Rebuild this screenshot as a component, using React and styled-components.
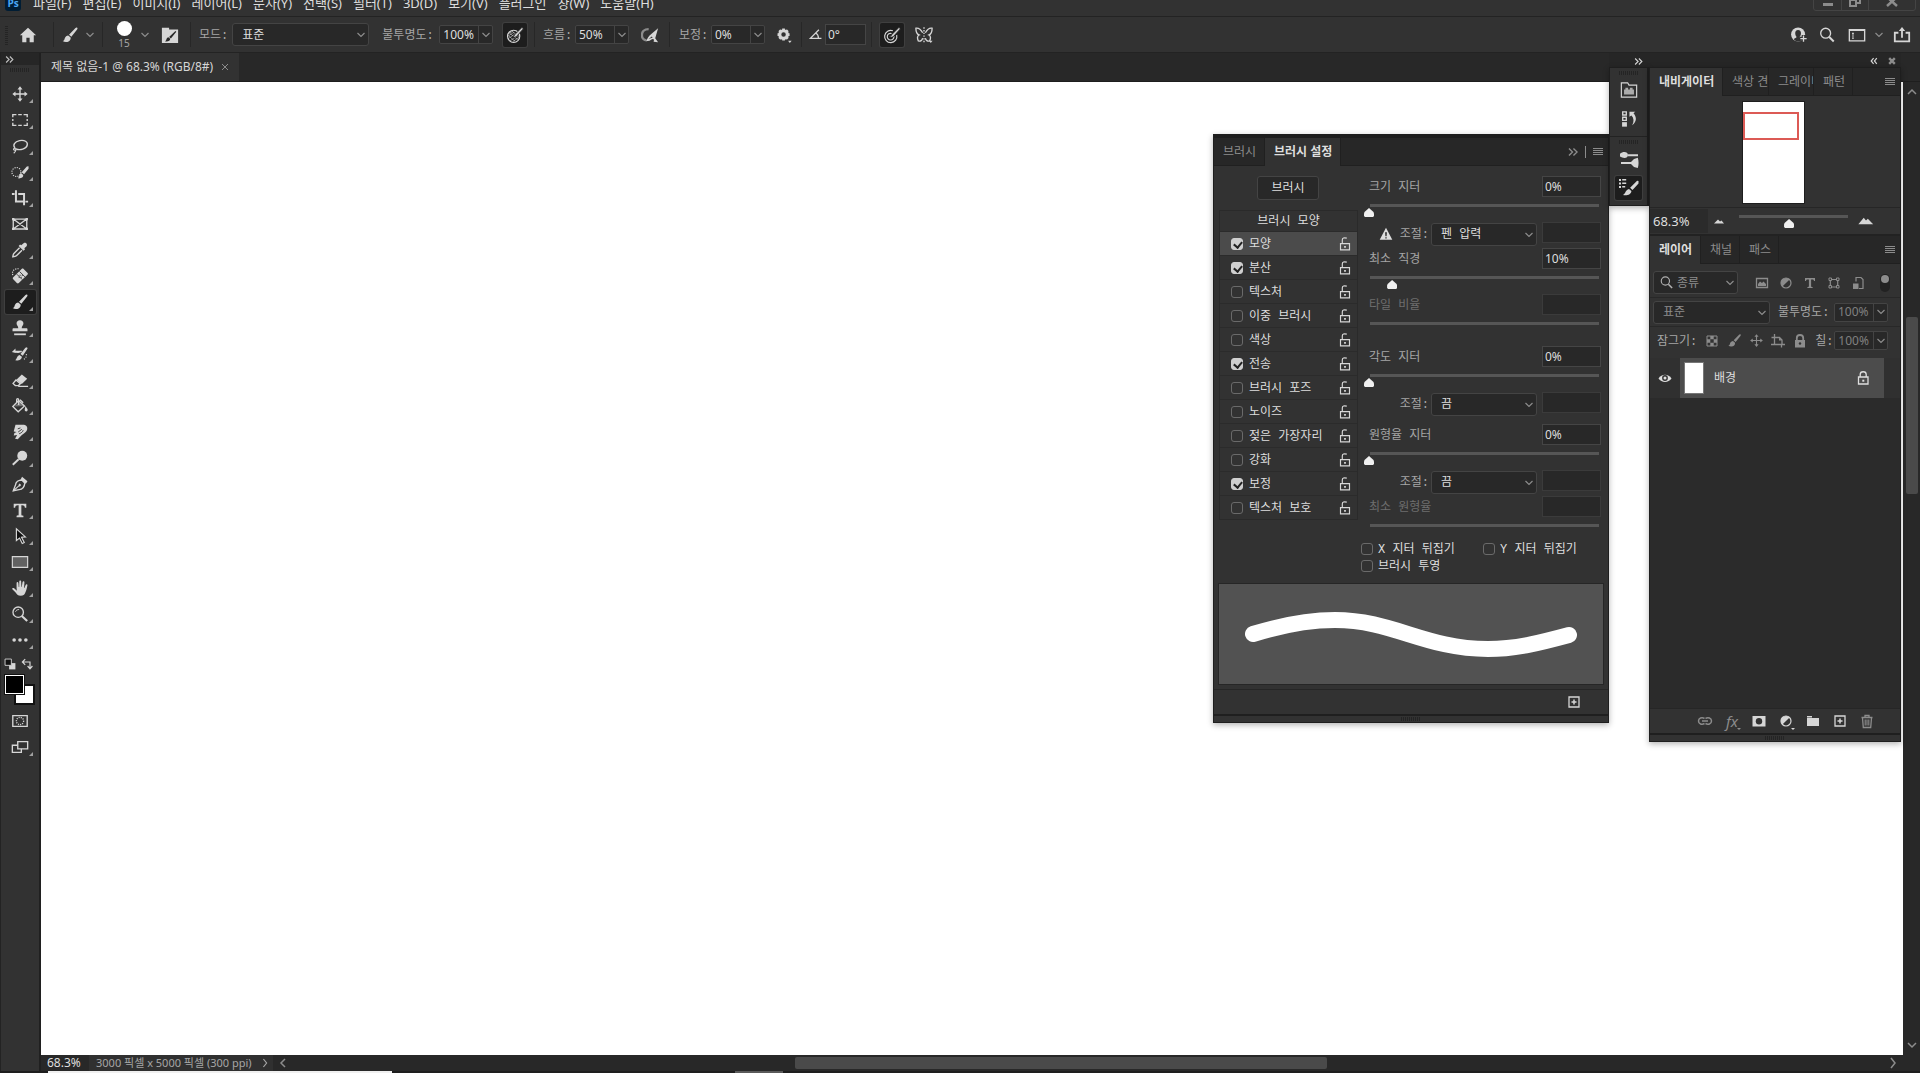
import React, { useState } from 'react';
import styled, { createGlobalStyle, css } from 'styled-components';

const GlobalStyle = createGlobalStyle`
  * {
    box-sizing: border-box;
  }
  body {
    margin: 0;
    overflow: hidden;
    background: #282828;
    color: #dedede;
    font: 13px/16px 'Noto Sans', 'Noto Sans CJK KR', sans-serif;
  }
  button, input, select {
    font: inherit;
    color: inherit;
    margin: 0;
    padding: 0;
    border: 0;
    background: none;
    outline: none;
  }
  button {
    display: flex;
    align-items: center;
    justify-content: center;
  }
  svg {
    display: block;
    flex: none;
  }
`;

const labelFont = css`
  font: 12px/16px 'Liberation Mono', 'Noto Sans CJK KR', monospace;
`;

/* icons, all drawn on a 20 x 20 grid */

const line = { fill: 'none', stroke: 'currentColor', strokeWidth: 1.5 };
const brushShape = (
  <>
    <path d="M17.8 1.8c.8.6.6 1.5.1 2.2l-6.4 8-2.6-2.3 7.2-7.4c.5-.6 1.200-.9 1.700-.5z" />
    <path d="M8 10.500l2.700 2.400c.5 3-2 5-4.700 5-1.700.1-3-.3-4.200-1.200 1.800-.4 1.900-1.500 2.400-3.100.6-1.900 2.200-3.100 3.800-3.100z" />
  </>
);

const icons = {
  home: <path d="M10 2L1 10.300h2.600V18h4.600v-5h3.600v5h4.600v-7.700H19z" />,
  brush: brushShape,
  brushPreset: (
    <>
      <path d="M1 2h8v2h10v15H1z" />
      <path d="M16 5.500l1 1-6 7.500-2-1.800zM8.200 12.500l2 1.800c0 2.400-2.200 3.300-5.700 2.900 1.700-.9 1.200-4.200 3.700-4.700z" fill="#282828" />
    </>
  ),
  chevron: <path d="M6.500 8l3.500 3.500L13.500 8" {...line} strokeWidth="1.200" />,
  chevronUp: <path d="M6 12l4-4 4 4" {...line} />,
  chevronDown: <path d="M6 8l4 4 4-4" {...line} />,
  chevronLeft: <path d="M12 6l-4 4 4 4" {...line} />,
  chevronRight: <path d="M8 5l4 5-4 5" {...line} />,
  collapse: <path d="M5.500 6l4 4-4 4M10.500 6l4 4-4 4" {...line} />,
  expand: <path d="M9.500 6.500L6.500 10l3 3.500M13.500 6.500l-3 3.500 3 3.500" {...line} />,
  close: <path d="M7 7l6 6M13 7l-6 6" {...line} strokeWidth="1" />,
  closeBold: <path d="M6.500 6.500l7 7M13.500 6.500l-7 7" {...line} strokeWidth="3" />,
  menu: <path d="M5 6.500h10M5 8.500h10M5 10.500h10M5 12.500h10" {...line} strokeWidth="1" />,
  opacityPen: (
    <>
      <circle cx="8.500" cy="11.500" r="6.800" {...line} strokeWidth="1.300" />
      <path d="M3.500 8l4-2M2.500 11l6.500-4M2.500 14l8-5.500M4.500 16.500l9-6M7.500 17.500l7-5M4 8l9 7M3 11l7 6M7 6l8 6" {...line} strokeWidth=".8" opacity=".8" />
      <path d="M17.800 1.500l1.500 1.700-8 8.800-3.300 1.300 1.300-3.300z" stroke="#1d1d1d" />
    </>
  ),
  sizePen: (
    <>
      <path d="M11 5.300a6.800 6.800 0 1 0 4.200 4.700M9.500 8.300a3.700 3.700 0 1 0 2.600 3" {...line} strokeWidth="1.300" />
      <circle cx="8.500" cy="11.700" r="1" />
      <path d="M17.800 1.500l1.500 1.700-8 8.800-3.300 1.300 1.300-3.300z" stroke="#1d1d1d" />
    </>
  ),
  airbrush: (
    <>
      <path d="M8.500 3.500C3.500 3.500 1 6.500 1 10s2 5.500 5 6" {...line} strokeWidth="2.600" opacity=".55" />
      <path d="M19 2.500L9.500 10.500l-1.500 2-2.500 4.500 4-.5 3-2 2 .5-.5 2.500 5 .5-3.200-4.300z" />
      <path d="M8.500 14.500l3.500-2.800 1 1z" fill="#323232" />
    </>
  ),
  gear: (
    <>
      <circle cx="9.500" cy="9.500" r="4.200" fill="none" stroke="currentColor" strokeWidth="3.400" />
      <path
        d="M9.500 2.800v2M9.500 14.200v2M2.800 9.500h2M14.200 9.500h2M4.800 4.800l1.400 1.400M12.800 12.800l1.400 1.400M14.200 4.800l-1.400 1.400M4.800 14.200l1.400-1.400"
        fill="none"
        stroke="currentColor"
        strokeWidth="3"
      />
      <path d="M14.500 16.500h4l-2 2.300z" />
    </>
  ),
  angle: <path d="M14 4.500L4 14.500h13M10.200 8.200c2 1 3.300 3.400 3.300 6.300" {...line} />,
  butterfly: (
    <>
      <path d="M8.500 7.500C6.500 4 3.500 2 1 2.500c0 3.300 1 6.500 3.500 7.500-2.300 1-2 4-.8 6.500 2.500 1 4.300-.5 4.800-3M11.500 7.500c2-3.500 5-5.500 7.500-5 0 3.300-1 6.500-3.500 7.500 2.300 1 2 4 .8 6.500-2.500 1-4.300-.5-4.800-3" {...line} />
      <path d="M10 1.500v17" {...line} strokeDasharray="1.500 1.500" />
      <path d="M15.500 16.500h4l-2 2.300z" />
    </>
  ),
  user: (
    <>
      <circle cx="9" cy="9.500" r="7.800" />
      <path d="M9 4.500c2.300 0 3.200 1.500 3.200 3.600 0 1.700-.6 2.800-1.300 3.600v1.100l3 1.700c-1 1.500-2.600 2.800-4.900 2.800s-3.900-1.300-4.900-2.800l3-1.700v-1.100c-.7-.8-1.300-1.900-1.300-3.600 0-2.100.9-3.600 3.200-3.600z" fill="#323232" />
      <path d="M15 10v8M11 14h8" fill="none" stroke="#323232" strokeWidth="4" />
      <path d="M15 10.500v7M11.500 14h7" {...line} />
    </>
  ),
  search: (
    <>
      <circle cx="8.500" cy="8" r="5.500" {...line} />
      <path d="M12.500 12.300l5 5" {...line} strokeWidth="2.200" />
    </>
  ),
  workspace: (
    <>
      <path d="M1.500 4h17v12.500h-17z" {...line} />
      <path d="M1.500 3.500h17v2h-17zM4.500 7.500h2v2h-2zM4.500 10.500h2v1.300h-2zM4.500 12.800h2v1.500h-2z" />
    </>
  ),
  share: (
    <>
      <path d="M6 7.500H2V17h16V7.500h-4" {...line} strokeWidth="2" />
      <path d="M10 13V4" {...line} strokeWidth="2" />
      <path d="M6.500 5.500L10 1l3.500 4.500z" />
    </>
  ),
  move: (
    <>
      <path d="M10 4v12M4 10h12" {...line} />
      <path d="M10 1.500L7.200 5h5.600zM10 18.500L7.200 15h5.600zM1.500 10L5 7.200v5.600zM18.500 10L15 7.200v5.600z" />
    </>
  ),
  marquee: <path d="M2 7V4h4M8 4h4M14 4h4v3M18 9v2M18 13v3h-4M12 16H8M6 16H2v-3M2 11V9" {...line} />,
  lasso: (
    <>
      <path d="M4.500 12.300C1.500 9 4 5 9.500 4s9.500 1.200 8.500 5.200-8 6-12.500 3.900" {...line} />
      <path d="M5.500 13.500c0 1.700-3.500 1.300-2.600-.3.800-1.500 3.200-.4 2.600 1.300-.4 1.300-1.200 2.500-2.500 3.500" {...line} strokeWidth="1.200" />
    </>
  ),
  quickSelect: (
    <>
      <circle cx="6" cy="10" r="5" {...line} strokeDasharray="1.300 1.300" strokeWidth="1.300" />
      <path d="M19.500 3.500v3l-5 6-2.600-2.300 5.700-6.300zM11 11l2.600 2.400c.2 2.800-2.400 4.100-6.100 3.600 2-1.300 1.400-5 3.500-6z" />
    </>
  ),
  crop: (
    <>
      <path d="M5.500 1.500V14H14M8 5.500h6.500V18" {...line} strokeWidth="2.200" />
      <path d="M1 4.400h3v2.200H1zM16 13h3v2h-3z" />
    </>
  ),
  frame: (
    <>
      <path d="M2.500 4.500h15v11h-15zM2.500 4.500l15 11M17.500 4.500l-15 11" {...line} />
      <path d="M1.200 3.200h2.600v2.600H1.200zM16.200 3.200h2.600v2.600h-2.600zM1.200 14.200h2.600v2.600H1.200zM16.200 14.200h2.600v2.600h-2.600z" />
    </>
  ),
  eyedropper: (
    <>
      <path d="M14 2.500c2-1.800 5 1 3.300 3.200l-2.500 2.400.8 1-1.700 1.600L8.500 5.500l1.600-1.600 1.200.9z" />
      <path d="M9.500 7.500l-6.300 6.300c-1 1-.9 2.700-1.200 3.700 1.500 0 3 0 4-1l6.200-6.200" {...line} />
    </>
  ),
  healing: (
    <>
      <path d="M14 2.200l4.200 4.200c.8.8.8 1.600 0 2.300l-9.500 9c-.7.700-1.500.7-2.200 0l-4-4c-.7-.7-.7-1.500 0-2.200l9.300-9.300c.7-.7 1.500-.7 2.200 0z" />
      <path d="M6.500 8l6 6M9.500 5l6 6" fill="none" stroke="#323232" />
      <path d="M9.500 8.500h1.200v1.200H9.500zM12 8.500h1.200v1.200H12zM10.800 10.700H12v1.200h-1.200zM8.500 10.700h1.200v1.200H8.500z" fill="#323232" />
      <path d="M2 9c-1.500-5 2-7.500 7-7" {...line} strokeWidth="1.300" strokeDasharray="1.300 1.300" />
    </>
  ),
  stamp: (
    <>
      <path d="M10 1.500c2.300 0 3.800 1.500 3.800 3.400 0 2-1.900 2.600-1.900 5.300H17c1 0 1.300.6 1.300 1.500v1.800H1.700v-1.800c0-.9.300-1.500 1.300-1.500h5.100c0-2.700-1.900-3.300-1.900-5.300 0-1.900 1.500-3.400 3.800-3.400z" />
      <path d="M3.500 16h13v2h-13z" />
    </>
  ),
  historyBrush: (
    <>
      <path d="M17.800 2.500l.6 1.500-5.300 8-2.600-2 5.500-7zM9.500 11l2.600 2c0 3-3.500 4.600-7.600 4 2.500-1.500 1.700-5 5-6z" />
      <path d="M1 7.800L5 4v2.500h7v1.300L8 9 5 8.500V9z" />
      <path d="M17 10c.6 3-1 5.500-4 6.500" {...line} strokeWidth="1.200" strokeDasharray="1.300 1.500" />
    </>
  ),
  eraser: (
    <>
      <path d="M12 4l6 4.500-6 6L6 9.800z" />
      <path d="M5.500 10l5 4-2.200 2.200H4.800l-2.500-2.400zM8 17h11" {...line} />
    </>
  ),
  bucket: (
    <>
      <path d="M8.500 4L2 10.500l6 6 7-6.500z" {...line} />
      <path d="M3.500 10.500l6-5 5.500 4.500z" opacity=".4" />
      <path d="M8.500 9V3c0-1.700-2.200-1.700-2.200 0v3M10 3l3.500 3.500" {...line} />
      <path d="M16 10c1.300 2 2.500 3 2.500 4.300 0 2.500-3.300 2.300-3.300 0z" />
    </>
  ),
  smudge: (
    <>
      <path d="M5 2h8c4 0 5.500 2 5 5-.6 3.500-4 4.500-7 7.500L7.500 18l-3-.4 2.300-4.300L3 14l.8-3 2.400-1L3 9.500z" />
      <path d="M7.500 6.500l3-1M8 10l4-3M9 12c2.500-1 4-2 4.500-4" fill="none" stroke="#323232" />
    </>
  ),
  dodge: (
    <>
      <circle cx="12.500" cy="7.500" r="5.500" />
      <path d="M8.500 11.500l-6.500 6" {...line} strokeWidth="2.200" />
    </>
  ),
  pen: (
    <>
      <path d="M12.300 5.500c-4 0-7 2.300-7.300 5.500l-2.500 6.500 6.500-1.200c3.500-.3 6-3.300 6.300-7.300z" {...line} />
      <path d="M12.300 2l6 5-1.800 2.700-6-4.500zM9.500 9.500l1.800 1.500-1.600 2L8 11.500z" />
      <path d="M2.700 17.500l6-5.500" {...line} strokeWidth="1.200" />
    </>
  ),
  type: <path d="M3 3h14v4.500h-1.600c-.3-2-.9-2.700-3-2.700h-.9v10c0 1.300.4 1.500 2.300 1.600V18H6.200v-1.600c1.900-.1 2.300-.3 2.300-1.600v-10h-.9c-2.100 0-2.700.7-3 2.700H3z" />,
  select: <path d="M6 2v13l3.500-2.700 3 6 2.200-1-3-6 4.300-.3z" fill="#111" stroke="currentColor" strokeWidth="1.300" />,
  shape: <path d="M1.500 4h17v12h-17z" fill="#626262" stroke="currentColor" strokeWidth="1.300" />,
  hand: <path d="M6.200 10V4.500c0-1.600 1.900-1.600 2 0L8.600 9h.5L9.200 2.800c0-1.600 2.100-1.600 2.100 0l.2 6.200h.4l.9-5.400c.3-1.500 2.200-1.300 2.100.2L14.500 10h.4l1.400-3.400c.6-1.300 2.200-.8 1.900.6-.8 3.900-1.500 6.300-2.500 8.300-.9 1.900-2 3-4.800 3-3.400 0-4.600-1.800-6-3.800L1.500 11.500c-.7-1.300.8-2.200 2-1.200l3 2.700z" />,
  zoom: (
    <>
      <circle cx="8" cy="8" r="5.800" {...line} />
      <path d="M5 7.500C5.500 6 7 5 9 5" {...line} strokeWidth="1" />
      <path d="M12 12.300l6 5.500" {...line} strokeWidth="2.400" />
    </>
  ),
  dots: (
    <>
      <circle cx="3.500" cy="10" r="2" />
      <circle cx="10" cy="10" r="2" />
      <circle cx="16.500" cy="10" r="2" />
    </>
  ),
  defaults: (
    <>
      <path d="M9 9h7v7H9z" />
      <path d="M4.500 4.500h7v7h-7z" fill="#111" stroke="currentColor" />
    </>
  ),
  swap: <path d="M3 7.500h9.500V15M6.500 4L3 7.500 6.500 11M9.500 12.500l3 3.500 3-3.500" {...line} />,
  quickMask: (
    <>
      <path d="M2 4h16v12H2z" {...line} />
      <circle cx="10" cy="10" r="4" {...line} strokeDasharray="1.200 1.200" />
    </>
  ),
  screenMode: (
    <>
      <path d="M1.500 8h10v8h-10z" {...line} />
      <path d="M7.500 4h11v8h-11z" fill="#323232" stroke="currentColor" strokeWidth="1.500" />
    </>
  ),
  library: (
    <>
      <path d="M1.500 2h7l1.500 2.500h8.500V18h-17z" {...line} strokeWidth="1.300" />
      <path d="M4.500 9.500H6V7.500h3v2h2v-2h3v2h1.500V15h-11z" opacity=".75" />
    </>
  ),
  history: (
    <>
      <path d="M3 2h4v3.500H3zM3 8h4v3.500H3z" {...line} />
      <path d="M2.300 13.500h5.400v5H2.300z" />
      <path d="M10.500 7.500V2h6.500l-2 1.700c4 4.500 3.500 9.800-1.500 13.300 2.300-4.500 2-8-.8-11z" />
    </>
  ),
  brushSettings: (
    <>
      <path d="M9 5.200h10v2H9zM2 13h10v2H2z" />
      <path d="M1 4.800c3-3 8-2.300 8 1.300S4 9.600 1 7.600zM11 14l4-4 3.800-1.200c1 3.500 1 7 0 10.200L15 18z" />
    </>
  ),
  brushList: (
    <>
      <path d="M0 1h2v2H0zM3.200 1h4v1.500h-4zM0 4.500h2v2H0zM3.200 4.500h4V6h-4zM0 8h2v2H0zM3.200 8h3v1.500h-3z" />
      <path d="M19.500 3v2.500l-6 6.500-2.400-2.200 7-7zM10 11l2.400 2c0 3.500-4.400 4.800-8.400 4 3-1.500 2-5 6-6z" />
    </>
  ),
  lockOpen: (
    <>
      <path d="M5 9.500h10v7H5zM7 9V5.500C7 3 9 3 12 3.500" {...line} strokeWidth="1.300" />
      <path d="M9 12.200h2v2H9z" />
    </>
  ),
  lock: (
    <>
      <path d="M5.500 9h9.500v7H5.500zM7.200 8.500V6.500c0-3.700 6-3.700 6 0v2" {...line} strokeWidth="1.300" />
      <path d="M9.300 11.700h2v2h-2z" />
    </>
  ),
  lockSolid: (
    <>
      <path d="M5 9h10v7.500H5z" />
      <path d="M6.800 9V7c0-4 6.400-4 6.400 0v2" {...line} strokeWidth="1.800" />
      <circle cx="10" cy="12.500" r="1.200" fill="#323232" />
    </>
  ),
  warning: (
    <>
      <path d="M10 3l7 13.500H3z" />
      <path d="M9 8h2l-.3 4.500H9.300zM9.200 13.500h1.600V15H9.200z" fill="#323232" />
    </>
  ),
  newItem: (
    <>
      <path d="M5 5h10v10H5z" {...line} strokeWidth="1.300" />
      <path d="M10 7.500v5M7.500 10h5" {...line} />
    </>
  ),
  mountainSmall: <path d="M5 12.500l4-4 2 2 1.500-1 2.500 3z" />,
  mountainLarge: <path d="M1.500 13.500l6-7 2.500 3 2-2 6 6z" />,
  image: (
    <>
      <path d="M4.500 5.500h11v9h-11z" {...line} strokeWidth="1.300" />
      <path d="M6 13V11l2-2.500 2 1.500 1.500-1.500L14 11v2z" />
    </>
  ),
  adjust: (
    <>
      <circle cx="10" cy="10" r="5" {...line} strokeWidth="1.200" />
      <path d="M13.600 6.400a5 5 0 0 0-7.200 7.200z" />
    </>
  ),
  typeSmall: <path d="M5 5h10v3h-1c-.2-1.100-.6-1.500-2-1.500h-.9v6.500c0 .9.300 1 1.500 1v1H7.400v-1c1.200 0 1.500-.1 1.500-1V6.500H8c-1.400 0-1.800.4-2 1.500H5z" />,
  vector: (
    <>
      <path d="M6 6.500h8M6 14h8M6.300 7v7M13.700 7v7" {...line} strokeWidth="1.200" />
      <path d="M5 5h2.500v2.500H5zM12.500 5H15v2.500h-2.500zM5 12.500h2.500V15H5zM12.500 12.500H15V15h-2.500z" fill="#323232" stroke="currentColor" />
    </>
  ),
  smart: (
    <>
      <path d="M8 8.500v-4h5l2 2v9h-4" {...line} strokeWidth="1.200" />
      <path d="M5 10.500h5.500V16H5z" />
    </>
  ),
  checker: (
    <>
      <path d="M5 5h10v10H5z" {...line} strokeWidth="1" />
      <path d="M8.300 5h3.400v3.300H8.300zM5 8.300h3.300v3.400H5zM11.700 8.300H15v3.400h-3.300zM8.300 11.700h3.400V15H8.300z" />
    </>
  ),
  artboard: (
    <>
      <path d="M6.500 3v3.500M3.500 6.500h8l2.500 2.500v5M6.500 6.500v7H14M13.500 16.500V14M3 13.500h3M14 13.500h3" {...line} strokeWidth="1.300" />
      <path d="M11 6.500V9.500h3z" />
    </>
  ),
  eye: (
    <>
      <path d="M3.500 10.500c3-5 10-5 13 0-3 4.500-10 4.500-13 0z" />
      <circle cx="10" cy="10" r="2.900" fill="#323232" />
      <circle cx="10" cy="10" r="1.500" />
    </>
  ),
  link: <path d="M9.500 7.500C7 6 3.500 7 3.500 10s3.500 4 6 2.500M10.500 7.500C13 6 16.500 7 16.500 10s-3.500 4-6 2.500M7 10h6" {...line} />,
  mask: (
    <>
      <path d="M3.500 5h13v10.500h-13z" />
      <circle cx="10" cy="10.200" r="3.200" fill="#323232" />
    </>
  ),
  folder: <path d="M4 5h5v1.500H4zM4 7h12v8H4z" />,
  trash: (
    <>
      <path d="M4.500 6.500h11M8 6V4.500h4V6M5.500 7l.8 9.500h7.400l.8-9.500" {...line} strokeWidth="1.300" />
      <path d="M8.200 8.500v6M10 8.500v6M11.800 8.500v6" {...line} strokeWidth="1.100" />
    </>
  ),
};

const Icon = ({ name, size = 20 }) => (
  <svg width={size} height={size} viewBox="0 0 20 20" fill="currentColor" aria-hidden="true">
    {icons[name]}
  </svg>
);

/* shared controls */

const IconButton = styled.button`
  display: flex;
  align-items: center;
  justify-content: center;
  width: ${(p) => p.$w || 24}px;
  height: 24px;
  flex: none;
  color: ${(p) => (p.$dim ? '#8c8c8c' : '#d6d6d6')};
  ${(p) =>
    p.$active &&
    css`
      background: #1d1d1d;
      box-shadow: 0 0 0 1px #3f3f3f;
      border-radius: 2px;
    `}
`;

const FlyoutButton = styled(IconButton)`
  position: relative;
  font-size: 15px;
  &::after {
    content: '';
    position: absolute;
    right: 3px;
    bottom: 1px;
    border: 2px solid transparent;
    border-top-color: currentColor;
  }
`;

const SelectBox = styled.span`
  position: relative;
  display: flex;
  width: ${(p) => p.$w}px;
  height: 23px;
  flex: none;
  color: ${(p) => (p.$dim ? '#8c8c8c' : '#dedede')};
  select {
    ${labelFont}
    appearance: none;
    width: 100%;
    padding-top: 2px;
    padding-left: ${(p) => p.$pad || 9}px;
    background: #282828;
    border: 1px solid #444;
    border-radius: 3px;
  }
  svg {
    position: absolute;
    top: 2px;
    right: -2px;
    color: #8c8c8c;
    pointer-events: none;
  }
  svg.lead {
    top: 4px;
    left: 6px;
    right: auto;
    color: #b0b0b0;
  }
`;

function Select({ label, options, width, dim, lead, pad }) {
  return (
    <SelectBox $w={width} $dim={dim} $pad={pad}>
      {lead && (
        <svg className="lead" width="15" height="15" viewBox="0 0 20 20">
          {icons[lead]}
        </svg>
      )}
      <select aria-label={label}>
        {options.map((o) => (
          <option key={o}>{o}</option>
        ))}
      </select>
      <Icon name="chevron" />
    </SelectBox>
  );
}

const Field = styled.input`
  width: ${(p) => p.$w || 59}px;
  height: 21px;
  flex: none;
  padding-left: 2px;
  font-size: 12px;
  background: #282828;
  border: 1px solid #454545;
  &:disabled {
    border-color: #3b3b3b;
  }
`;

const ComboBox = styled.span`
  display: flex;
  width: 54px;
  height: 19px;
  flex: none;
  background: #282828;
  border: 1px solid #444;
  border-radius: 2px;
  color: ${(p) => (p.$dim ? '#808080' : '#dedede')};
  input {
    width: 38px;
    padding-left: 3px;
    font-size: 12px;
    line-height: 16px;
  }
  button {
    flex: 1;
    overflow: hidden;
    border-left: 1px solid #444;
    color: #8c8c8c;
  }
`;

const Combo = ({ id, value, dim }) => (
  <ComboBox $dim={dim}>
    <input id={id} defaultValue={value} />
    <button type="button" aria-label={`${value} ▾`}>
      <Icon name="chevron" />
    </button>
  </ComboBox>
);

const Label = styled.label`
  ${labelFont}
  flex: none;
  padding-top: 2px;
  white-space: nowrap;
  color: ${(p) => (p.$dim ? '#6e6e6e' : '#a6a6a6')};
`;

const Grip = styled.div`
  width: ${(p) => (p.$tall ? 3 : 20)}px;
  height: ${(p) => (p.$tall ? 20 : 4)}px;
  flex: none;
  background: repeating-linear-gradient(
    ${(p) => (p.$tall ? '0deg' : '90deg')},
    #242424 0 1px,
    transparent 1px 2px
  );
`;

const Checkbox = styled.input.attrs({ type: 'checkbox' })`
  appearance: none;
  position: relative;
  width: 12px;
  height: 12px;
  flex: none;
  border: 1px solid #6a6a6a;
  border-radius: 3px;
  &:checked {
    background: #cfcfcf;
    border-color: #cfcfcf;
  }
  &:checked::after {
    content: '';
    position: absolute;
    left: 3px;
    top: 1px;
    width: 4px;
    height: 6px;
    border: solid #222;
    border-width: 0 2px 2px 0;
    transform: rotate(40deg);
  }
`;

const Slider = styled.input.attrs({ type: 'range' })`
  appearance: none;
  display: block;
  width: calc(100% + 11px);
  height: 24px;
  margin: 0 -6px 0 -5px;
  background: linear-gradient(#565656, #565656) no-repeat 6px 6px / calc(100% - 12px) 3px;
  &::-webkit-slider-runnable-track {
    height: 24px;
  }
  &::-webkit-slider-thumb {
    appearance: none;
    width: 10px;
    height: 9px;
    margin-top: 10px;
    background: #f0f0f0;
    clip-path: polygon(50% 0, 95% 45%, 100% 60%, 100% 90%, 90% 100%, 10% 100%, 0 90%, 0 60%, 5% 45%);
  }
  &:disabled::-webkit-slider-thumb {
    visibility: hidden;
  }
`;

/* window frame */

const Screen = styled.div`
  display: flex;
  flex-direction: column;
  height: 100vh;
`;

const MenuBar = styled.header`
  display: flex;
  align-items: flex-end;
  justify-content: space-between;
  height: 17px;
  flex: none;
  overflow: hidden;
  padding: 0 4px 0 5px;
  background: #323232;
  border-bottom: 1px solid #232323;
`;

const Menus = styled.nav`
  display: flex;
  align-items: center;
  gap: 11px;
  height: 26px;
  button {
    white-space: nowrap;
  }
`;

const AppLogo = styled.span`
  width: 16px;
  height: 16px;
  margin-right: 1px;
  border-radius: 3px;
  background: #001d34;
  color: #4ba8f5;
  font: bold 10px/16px 'Open Sans', sans-serif;
  text-align: center;
`;

const WindowButtons = styled.div`
  display: flex;
  height: 22px;
  margin-bottom: 5px;
  border: 1px solid #444;
  border-radius: 3px;
  color: #8c8c8c;
  button {
    width: 27px;
    align-items: flex-end;
    padding-bottom: 3px;
  }
  button + button {
    border-left: 1px solid #444;
  }
  button:last-child {
    width: 47px;
  }
`;

const OptionsBar = styled.div`
  display: flex;
  align-items: center;
  height: 36px;
  flex: none;
  padding-left: 5px;
  background: #323232;
  border-bottom: 1px solid #232323;
`;

const Group = styled.div`
  display: flex;
  align-items: center;
  width: ${(p) => p.$w}px;
  height: 25px;
  flex: none;
  gap: ${(p) => p.$gap || 0}px;
  padding-left: ${(p) => p.$pad || 7}px;
  border-right: ${(p) => (p.$last ? 0 : '1px solid #272727')};
`;

const TipSize = styled.div`
  display: flex;
  flex-direction: column;
  align-items: center;
  gap: 1px;
  width: 30px;
  color: #a6a6a6;
  font-size: 10px;
  line-height: 12px;
  &::before {
    content: '';
    width: 15px;
    height: 15px;
    border-radius: 50%;
    background: #fff;
  }
`;

const Spacer = styled.div`
  flex: 1;
`;

const RightTools = styled.div`
  display: flex;
  align-items: center;
  padding-right: 2px;
`;

const Workspace = styled.main`
  position: relative;
  display: flex;
  flex: 1;
  min-height: 0;
`;

/* tool column */

const ToolColumn = styled.aside`
  display: flex;
  flex-direction: column;
  width: 41px;
  flex: none;
  background: #323232;
  border-left: 1px solid #232323;
  border-right: 2px solid #202020;
`;

const ToolHead = styled.div`
  height: 12px;
  flex: none;
  margin-bottom: 3px;
  background: #262626;
  color: #c0c0c0;
  button {
    width: 17px;
    height: 12px;
    overflow: hidden;
  }
`;

const Tools = styled.div`
  display: flex;
  flex-direction: column;
  align-items: center;
  gap: 2px;
  padding-top: ${(p) => p.$top || 0}px;
`;

const Tool = styled(IconButton)`
  position: relative;
  width: 31px;
  padding-right: 1px;
  &::after {
    content: '';
    display: ${(p) => (p.$plain ? 'none' : 'block')};
    position: absolute;
    right: 3px;
    bottom: 3px;
    border: 2px solid;
    border-color: transparent #a0a0a0 #a0a0a0 transparent;
  }
`;

const ColorModes = styled.div`
  display: flex;
  justify-content: space-between;
  padding: 3px 3px 0 0;
  color: #d6d6d6;
  button {
    width: 18px;
    height: 18px;
  }
`;

const Swatches = styled.div`
  position: relative;
  height: 30px;
  margin: 2px 0 4px 4px;
`;

const Swatch = styled.button`
  position: absolute;
  left: ${(p) => (p.$back ? 10 : 0)}px;
  top: ${(p) => (p.$back ? 10 : 0)}px;
  width: 19px;
  height: 19px;
  background: ${(p) => (p.$back ? '#fff' : '#000')};
  border: 1px solid ${(p) => (p.$back ? '#111' : '#fff')};
  outline: 1px solid #111;
`;

/* document */

const DocumentArea = styled.section`
  display: flex;
  flex-direction: column;
  flex: 1;
  min-width: 0;
`;

const DocTabs = styled.div`
  display: flex;
  height: 29px;
  flex: none;
  border-bottom: 1px solid #1e1e1e;
`;

const DocTab = styled.div`
  display: flex;
  align-items: center;
  width: 198px;
  padding-left: 10px;
  font-size: 12px;
  white-space: nowrap;
  background: #323232;
  color: #d6d6d6;
  button {
    width: 20px;
    margin-left: auto;
    margin-right: 4px;
    color: #8c8c8c;
  }
`;

const CanvasRow = styled.div`
  display: flex;
  flex: 1;
  min-height: 0;
`;

const Canvas = styled.div`
  flex: 1;
  background: #fff;
`;

const ScrollBar = styled.div`
  display: flex;
  flex-direction: ${(p) => (p.$vertical ? 'column' : 'row')};
  align-items: center;
  flex: ${(p) => (p.$vertical ? '0 0 17px' : 1)};
  color: #8c8c8c;
  overflow: hidden;
`;

/* $start, $size and $rest are shares of the document's extent */
const ScrollTrack = styled.div`
  flex: 1;
  display: grid;
  ${(p) => (p.$vertical ? 'width: 12px;' : 'height: 12px;')}
  grid-template-${(p) => (p.$vertical ? 'rows' : 'columns')}: ${(p) =>
    `${p.$start}fr ${p.$size}fr ${p.$rest}fr`};
  &::before {
    content: '';
  }
  &::after {
    content: '';
    border-radius: 2px;
    background: #4a4a4a;
  }
`;

const StatusBar = styled.footer`
  display: flex;
  align-items: center;
  height: 16px;
  flex: none;
  font-size: 12px;
  background: #282828;
`;

const ZoomField = styled.input`
  width: 48px;
  padding-left: 6px;
`;

const DocInfo = styled.button`
  display: flex;
  justify-content: space-between;
  width: 184px;
  height: 16px;
  flex: none;
  padding-left: 7px;
  font-size: 11px;
  white-space: nowrap;
  color: #a6a6a6;
  background: #303030;
`;

const Taskbar = styled.div`
  display: flex;
  height: 2px;
  flex: none;
  padding-left: 48px;
  background: #1e1e1e;
  gap: 343px;
  &::before {
    content: '';
    width: 344px;
    background: #f0f0f0;
  }
  &::after {
    content: '';
    width: 48px;
    background: #5a5a5a;
  }
`;

/* floating panels */

const panelEdge = css`
  background: #323232;
  border: 1px solid #1e1e1e;
  box-shadow: 0 2px 6px rgba(0, 0, 0, 0.3);
`;

const BrushPanel = styled.section`
  ${panelEdge}
  position: absolute;
  top: 81px;
  right: 311px;
  width: 396px;
  border-top-width: 4px;
`;

const TabRow = styled.div`
  display: flex;
  align-items: center;
  height: 28px;
  background: #272727;
  border-bottom: 1px solid #202020;
`;

const PanelTab = styled.button`
  width: ${(p) => p.$w}px;
  height: 28px;
  overflow: hidden;
  padding-left: 9px;
  justify-content: flex-start;
  white-space: nowrap;
  font-size: 12px;
  font-weight: ${(p) => (p.$active ? 'bold' : 'normal')};
  color: ${(p) => (p.$active ? '#dedede' : '#8c8c8c')};
  background: ${(p) => (p.$active ? '#323232' : 'none')};
  border-right: 1px solid #202020;
`;

const Divider = styled.span`
  width: 1px;
  height: 12px;
  margin-right: 2px;
  background: #8c8c8c;
`;

const BrushBody = styled.div`
  display: flex;
  gap: 11px;
  padding: 10px 9px 0 5px;
`;

const BrushList = styled.div`
  width: 139px;
  ${labelFont}
`;

const PresetButton = styled.button`
  width: 62px;
  height: 24px;
  margin: 0 auto 10px 38px;
  padding-top: 2px;
  background: #282828;
  border: 1px solid #444;
  border-radius: 3px;
`;

const OptionList = styled.ul`
  margin: 0;
  padding: 0;
  list-style: none;
  border: 1px solid #2a2a2a;
`;

const OptionHead = styled.li`
  height: 20px;
  line-height: 22px;
  text-align: center;
`;

const Option = styled.li`
  display: flex;
  align-items: center;
  height: 24px;
  padding-left: 11px;
  border-top: 1px solid #2b2b2b;
  background: ${(p) => (p.$active ? '#4b4b4b' : 'none')};
  label {
    flex: 1;
    padding: 2px 0 0 6px;
    white-space: nowrap;
  }
`;

const Settings = styled.div`
  flex: 1;
  min-width: 0;
`;

const SettingRow = styled.div`
  display: flex;
  align-items: center;
  justify-content: space-between;
  height: 22px;
  margin-right: -2px;
  ${Field} {
    align-self: flex-start;
  }
`;

const ControlRow = styled.div`
  display: flex;
  align-items: center;
  justify-content: flex-end;
  gap: 2px;
  height: 24px;
  margin: 0 -2px ${(p) => p.$after || 2}px 0;
  > svg {
    margin-right: 3px;
  }
  ${Field} {
    align-self: flex-start;
    margin-left: 3px;
  }
`;

const Gap = styled.div`
  height: 6px;
`;

const Flips = styled.div`
  display: grid;
  grid-template-columns: 122px 1fr;
  margin: -2px 0 9px -8px;
`;

const FlipLabel = styled.label`
  ${labelFont}
  display: flex;
  align-items: center;
  gap: 5px;
  height: 17px;
  white-space: nowrap;
  span {
    padding-top: 2px;
  }
`;

const StrokePreview = styled.div`
  height: 102px;
  margin: 0 4px 4px;
  background: #525252;
  border: 1px solid #262626;
  svg {
    width: 100%;
    height: 100%;
  }
`;

const PanelFoot = styled.div`
  display: flex;
  align-items: center;
  justify-content: flex-end;
  height: 25px;
  padding-right: ${(p) => p.$pad}px;
  border-top: 1px solid #262626;
`;

const ResizeEdge = styled.div`
  display: flex;
  justify-content: center;
  height: 8px;
  padding-top: 1px;
  border-top: 2px solid #1f1f1f;
`;

const Dock = styled.div`
  position: absolute;
  top: 0;
  right: 19px;
  width: 292px;
`;

const DockHead = styled.div`
  display: flex;
  align-items: center;
  height: 14px;
  padding-top: 2px;
  background: #262626;
  color: #b0b0b0;
  button {
    height: 14px;
    overflow: hidden;
  }
`;

const DockBody = styled.div`
  display: flex;
  align-items: flex-start;
`;

const IconDock = styled.div`
  ${panelEdge}
  width: 40px;
  flex: none;
  border-right-width: 2px;
`;

const DockGroup = styled.div`
  display: flex;
  flex-direction: column;
  align-items: center;
  gap: 3px;
  padding: 3px 0 5px;
  & + & {
    border-top: 1px solid #222;
  }
  button + button {
    margin-top: 2px;
  }
`;

const Panels = styled.div`
  ${panelEdge}
  flex: 1;
  min-width: 0;
`;

const NavView = styled.div`
  display: flex;
  justify-content: center;
  height: 112px;
  padding: 5px 3px 0 0;
  border-bottom: 1px solid #262626;
`;

const NavPage = styled.div`
  width: 63px;
  height: 103px;
  padding-top: 10px;
  background: #fff;
  border: 1px solid #1e1e1e;
`;

const NavFrame = styled.div`
  width: 56px;
  height: 28px;
  border: 2px solid #dc5a55;
`;

const NavZoom = styled.div`
  display: flex;
  align-items: center;
  height: 28px;
  border-bottom: 2px solid #222;
  ${ZoomField} {
    width: 58px;
    height: 24px;
    padding-left: 3px;
    font-size: 13px;
    background: #2b2b2b;
  }
`;

const NavSlider = styled.div`
  width: 110px;
  margin: 0 8px;
`;

const LayerRow = styled.div`
  display: flex;
  align-items: center;
  height: ${(p) => p.$h}px;
  padding: ${(p) => p.$top || 0}px 12px ${(p) => p.$bottom || 0}px ${(p) => p.$pad || 3}px;
  border-bottom: ${(p) => (p.$last ? 0 : '1px solid #282828')};
`;

const Switch = styled.input.attrs({ type: 'checkbox' })`
  appearance: none;
  width: 10px;
  height: 18px;
  margin: 0 -2px 0 auto;
  border-radius: 5px;
  background: #222;
  &::before {
    content: '';
    display: block;
    width: 8px;
    height: 8px;
    margin: 1px;
    border-radius: 50%;
    background: #8c8c8c;
  }
`;

const LayerList = styled.div`
  height: 350px;
  background: #2b2b2b;
`;

const Layer = styled.div`
  display: flex;
  height: 40px;
  padding-right: 16px;
  background: #303030;
  > button {
    width: 30px;
    height: 40px;
    color: #dedede;
  }
`;

const LayerBody = styled.div`
  ${labelFont}
  display: flex;
  align-items: center;
  flex: 1;
  padding: 0 11px 0 4px;
  background: #4c4c4c;
  span {
    padding-top: 2px;
  }
`;

const LayerThumb = styled.div`
  width: 20px;
  height: 32px;
  margin-right: 10px;
  background: #fff;
  border: 1px solid #777;
`;

const DockIcons = styled.div`
  display: flex;
  align-items: center;
  gap: 3px;
  color: #d6d6d6;
`;

const menus = [
  '파일(F)', '편집(E)', '이미지(I)', '레이어(L)', '문자(Y)', '선택(S)',
  '필터(T)', '3D(D)', '보기(V)', '플러그인', '창(W)', '도움말(H)',
];

const tools = [
  'move', 'marquee', 'lasso', 'quickSelect', 'crop', 'frame', 'eyedropper', 'healing',
  'brush', 'stamp', 'historyBrush', 'eraser', 'bucket', 'smudge', 'dodge', 'pen', 'type',
  'select', 'shape', 'hand', 'zoom', 'dots',
];

const brushOptions = [
  ['모양', true], ['분산', true], ['텍스처', false], ['이중 브러시', false],
  ['색상', false], ['전송', true], ['브러시 포즈', false], ['노이즈', false],
  ['젖은 가장자리', false], ['강화', false], ['보정', true], ['텍스처 보호', false],
];

function Toolbar() {
  const [tool, setTool] = useState('brush');
  return (
    <ToolColumn>
      <ToolHead>
        <button type="button" aria-label="확장">
          <Icon name="collapse" size={15} />
        </button>
      </ToolHead>
      <Tools>
        <Grip />
      </Tools>
      <Tools $top={10}>
        {tools.map((name) => (
          <Tool
            key={name}
            type="button"
            aria-label={name}
            $active={tool === name}
            $plain={name === 'frame'}
            onClick={() => setTool(name)}
          >
            <Icon name={name} size={18} />
          </Tool>
        ))}
      </Tools>
      <ColorModes>
        <button type="button" aria-label="기본 색상"><Icon name="defaults" size={18} /></button>
        <button type="button" aria-label="색상 전환"><Icon name="swap" size={16} /></button>
      </ColorModes>
      <Swatches>
        <Swatch $back type="button" aria-label="배경색" />
        <Swatch type="button" aria-label="전경색" />
      </Swatches>
      <Tools>
        <Tool $plain type="button" aria-label="빠른 마스크"><Icon name="quickMask" size={18} /></Tool>
        <Tool type="button" aria-label="화면 모드"><Icon name="screenMode" size={18} /></Tool>
      </Tools>
    </ToolColumn>
  );
}

function Options() {
  return (
    <OptionsBar>
      <Grip $tall />
      <Group $w={46} $pad={8}>
        <IconButton type="button" aria-label="홈"><Icon name="home" size={18} /></IconButton>
      </Group>
      <Group $w={49} $pad={5}>
        <IconButton type="button" aria-label="브러시 도구" $w={22}><Icon name="brush" size={18} /></IconButton>
        <IconButton type="button" aria-label="도구 사전 설정" $dim $w={18}><Icon name="chevron" /></IconButton>
      </Group>
      <Group $w={88} $pad={6}>
        <TipSize>15</TipSize>
        <IconButton type="button" aria-label="브러시 사전 설정" $dim $w={12}><Icon name="chevron" /></IconButton>
        <IconButton type="button" aria-label="브러시 설정 패널" $w={38}><Icon name="brushPreset" size={18} /></IconButton>
      </Group>
      <Group $w={344} $pad={8} $gap={4}>
        <Label as="span">모드:</Label>
        <Select label="모드" options={['표준']} width={137} />
        <Group $w={62} $pad={9} $last><Label htmlFor="opacity">불투명도:</Label></Group>
        <Combo id="opacity" value="100%" />
        <Group $w={31} $pad={6} $last>
          <IconButton $active type="button" aria-label="불투명도에 압력 사용"><Icon name="opacityPen" size={18} /></IconButton>
        </Group>
      </Group>
      <Group $w={135} $pad={7}>
        <Group $w={33} $pad={1} $last><Label htmlFor="flow">흐름:</Label></Group>
        <Combo id="flow" value="50%" />
        <IconButton type="button" aria-label="에어브러시" $w={42}><Icon name="airbrush" size={18} /></IconButton>
      </Group>
      <Group $w={132} $pad={8}>
        <Group $w={33} $pad={1} $last><Label htmlFor="smooth">보정:</Label></Group>
        <Combo id="smooth" value="0%" />
        <IconButton type="button" aria-label="보정 옵션" $w={37}><Icon name="gear" size={18} /></IconButton>
      </Group>
      <Group $w={70} $pad={4}>
        <IconButton as="label" htmlFor="angle" $w={19} aria-label="각도"><Icon name="angle" size={17} /></IconButton>
        <Field id="angle" $w={41} defaultValue="0°" />
      </Group>
      <Group $w={70} $pad={8} $gap={8} $last>
        <IconButton $active type="button" aria-label="크기에 압력 사용"><Icon name="sizePen" size={18} /></IconButton>
        <IconButton type="button" aria-label="대칭"><Icon name="butterfly" size={18} /></IconButton>
      </Group>
      <Spacer />
      <RightTools>
        <IconButton type="button" aria-label="공유 초대" $w={28}><Icon name="user" size={18} /></IconButton>
        <IconButton type="button" aria-label="검색" $w={28}><Icon name="search" size={18} /></IconButton>
        <IconButton type="button" aria-label="작업 영역" $w={31}><Icon name="workspace" size={18} /></IconButton>
        <IconButton type="button" aria-label="작업 영역 선택" $dim $w={14}><Icon name="chevron" /></IconButton>
        <IconButton type="button" aria-label="공유" $w={32}><Icon name="share" size={18} /></IconButton>
      </RightTools>
    </OptionsBar>
  );
}

function Setting({ label, value, amount = 0, disabled }) {
  return (
    <>
      <SettingRow>
        <Label $dim={disabled}>{label}</Label>
        <Field aria-label={label} defaultValue={value} disabled={disabled} />
      </SettingRow>
      <Slider aria-label={label} defaultValue={amount} disabled={disabled} />
    </>
  );
}

function Control({ value, warning, after }) {
  return (
    <ControlRow $after={after}>
      {warning && <Icon name="warning" size={18} />}
      <Label as="span">조절:</Label>
      <Select label="조절" options={[value]} width={106} />
      <Field disabled aria-label="단계" />
    </ControlRow>
  );
}

function BrushSettings() {
  return (
    <BrushPanel>
      <TabRow>
        <PanelTab type="button" $w={51}>브러시</PanelTab>
        <PanelTab type="button" $w={76} $active>브러시 설정</PanelTab>
        <Spacer />
        <IconButton type="button" aria-label="축소" $dim><Icon name="collapse" size={18} /></IconButton>
        <Divider />
        <IconButton type="button" aria-label="패널 메뉴" $dim $w={20}><Icon name="menu" /></IconButton>
      </TabRow>
      <BrushBody>
        <BrushList>
          <PresetButton type="button">브러시</PresetButton>
          <OptionList>
            <OptionHead>브러시 모양</OptionHead>
            {brushOptions.map(([name, checked], i) => (
              <Option key={name} $active={i === 0}>
                <Checkbox id={`option-${i}`} defaultChecked={checked} />
                <label htmlFor={`option-${i}`}>{name}</label>
                <IconButton type="button" aria-label={`${name} 잠금`}>
                  <Icon name="lockOpen" size={18} />
                </IconButton>
              </Option>
            ))}
          </OptionList>
        </BrushList>
        <Settings>
          <Setting label="크기 지터" value="0%" />
          <Control value="펜 압력" warning />
          <Setting label="최소 직경" value="10%" amount={10} />
          <Setting label="타일 비율" disabled />
          <Gap />
          <Setting label="각도 지터" value="0%" />
          <Control value="끔" after={8} />
          <Setting label="원형율 지터" value="0%" />
          <Control value="끔" />
          <Setting label="최소 원형율" disabled />
          <Flips>
            <FlipLabel><Checkbox /><span>X 지터 뒤집기</span></FlipLabel>
            <FlipLabel><Checkbox /><span>Y 지터 뒤집기</span></FlipLabel>
            <FlipLabel><Checkbox /><span>브러시 투영</span></FlipLabel>
          </Flips>
        </Settings>
      </BrushBody>
      <StrokePreview>
        <svg viewBox="0 0 384 100" aria-hidden="true">
          <path
            d="M34 50C60 42 87 36 116 36c58 0 90 29 153 29 29 0 55-7 81-14"
            fill="none"
            stroke="#fff"
            strokeWidth="16"
            strokeLinecap="round"
          />
        </svg>
      </StrokePreview>
      <PanelFoot $pad={22}>
        <IconButton type="button" aria-label="새 브러시"><Icon name="newItem" /></IconButton>
      </PanelFoot>
      <ResizeEdge><Grip /></ResizeEdge>
    </BrushPanel>
  );
}

function RightDock() {
  return (
    <Dock>
      <DockHead>
        <IconButton type="button" aria-label="확장" $w={58}><Icon name="collapse" size={15} /></IconButton>
        <Spacer />
        <IconButton type="button" aria-label="축소" $w={17}><Icon name="expand" size={16} /></IconButton>
        <IconButton type="button" aria-label="닫기" $dim $w={19}><Icon name="closeBold" size={16} /></IconButton>
      </DockHead>
      <DockBody>
        <IconDock>
          <DockGroup>
            <Grip />
            <IconButton type="button" aria-label="라이브러리"><Icon name="library" size={18} /></IconButton>
            <IconButton type="button" aria-label="작업 내역"><Icon name="history" size={18} /></IconButton>
          </DockGroup>
          <DockGroup>
            <Grip />
            <IconButton type="button" aria-label="브러시"><Icon name="brushSettings" /></IconButton>
            <IconButton type="button" aria-label="브러시 설정" $active $w={27}><Icon name="brushList" /></IconButton>
          </DockGroup>
        </IconDock>
        <Panels>
          <TabRow>
            <PanelTab type="button" $w={73} $active>내비게이터</PanelTab>
            <PanelTab type="button" $w={46}>색상 견</PanelTab>
            <PanelTab type="button" $w={45}>그레이디</PanelTab>
            <PanelTab type="button" $w={39}>패턴</PanelTab>
            <Spacer />
            <IconButton type="button" aria-label="패널 메뉴" $dim $w={20}><Icon name="menu" /></IconButton>
          </TabRow>
          <NavView>
            <NavPage><NavFrame /></NavPage>
          </NavView>
          <NavZoom>
            <ZoomField aria-label="확대/축소" defaultValue="68.3%" />
            <IconButton type="button" aria-label="축소" $w={22}><Icon name="mountainSmall" /></IconButton>
            <NavSlider><Slider aria-label="배율" defaultValue={46} /></NavSlider>
            <IconButton type="button" aria-label="확대" $w={20}><Icon name="mountainLarge" size={18} /></IconButton>
          </NavZoom>
          <TabRow>
            <PanelTab type="button" $w={51} $active>레이어</PanelTab>
            <PanelTab type="button" $w={39}>채널</PanelTab>
            <PanelTab type="button" $w={39}>패스</PanelTab>
            <Spacer />
            <IconButton type="button" aria-label="패널 메뉴" $dim $w={20}><Icon name="menu" /></IconButton>
          </TabRow>
          <LayerRow $h={34} $top={4}>
            <Select label="필터" options={['종류']} width={85} dim lead="search" pad={23} />
            <Group $w={134} $pad={12} $last>
              {['image', 'adjust', 'typeSmall', 'vector', 'smart'].map((name) => (
                <IconButton key={name} type="button" aria-label={name} $dim><Icon name={name} /></IconButton>
              ))}
            </Group>
            <Switch aria-label="필터 켜기" />
          </LayerRow>
          <LayerRow $h={29}>
            <Select label="혼합 모드" options={['표준']} width={117} dim />
            <Group $w={64} $pad={8} $last><Label htmlFor="layer-opacity">불투명도:</Label></Group>
            <Combo id="layer-opacity" value="100%" dim />
          </LayerRow>
          <LayerRow $h={31} $pad={7} $bottom={4} $last>
            <Label as="span">잠그기:</Label>
            <Group $w={117} $pad={4} $last>
              {['checker', 'brush', 'move', 'artboard', 'lockSolid'].map((name) => (
                <IconButton key={name} type="button" aria-label={name} $dim $w={22}>
                  <Icon name={name} size={name === 'brush' || name === 'move' ? 15 : 20} />
                </IconButton>
              ))}
            </Group>
            <Group $w={20} $pad={1} $last><Label htmlFor="fill">칠:</Label></Group>
            <Combo id="fill" value="100%" dim />
          </LayerRow>
          <LayerList>
            <Layer>
              <button type="button" aria-label="레이어 표시"><Icon name="eye" /></button>
              <LayerBody>
                <LayerThumb />
                <span>배경</span>
                <Spacer />
                <Icon name="lock" />
              </LayerBody>
            </Layer>
          </LayerList>
          <PanelFoot $pad={21}>
            <DockIcons>
              <IconButton type="button" aria-label="레이어 연결" $dim><Icon name="link" /></IconButton>
              <FlyoutButton type="button" aria-label="레이어 스타일" $dim><i>fx</i></FlyoutButton>
              <IconButton type="button" aria-label="마스크 추가"><Icon name="mask" /></IconButton>
              <FlyoutButton type="button" aria-label="조정 레이어"><Icon name="adjust" /></FlyoutButton>
              <IconButton type="button" aria-label="새 그룹"><Icon name="folder" /></IconButton>
              <IconButton type="button" aria-label="새 레이어"><Icon name="newItem" /></IconButton>
              <IconButton type="button" aria-label="레이어 삭제" $dim><Icon name="trash" /></IconButton>
            </DockIcons>
          </PanelFoot>
          <ResizeEdge><Grip /></ResizeEdge>
        </Panels>
      </DockBody>
    </Dock>
  );
}

const ScrollCorner = styled.div`
  width: 17px;
  flex: none;
`;

function App() {
  return (
    <Screen>
      <GlobalStyle />
      <MenuBar>
        <Menus>
          <AppLogo>Ps</AppLogo>
          {menus.map((name) => (
            <button key={name} type="button">{name}</button>
          ))}
        </Menus>
        <WindowButtons>
          <button type="button" aria-label="최소화">
            <svg width="12" height="12" viewBox="0 0 12 12"><path d="M1 8h10v3H1z" fill="currentColor" /></svg>
          </button>
          <button type="button" aria-label="이전 크기로">
            <svg width="12" height="12" viewBox="0 0 12 12" fill="none" stroke="currentColor" strokeWidth="2">
              <path d="M1 5h6v6H1zM4 2h7v6H8" />
            </svg>
          </button>
          <button type="button" aria-label="닫기">
            <svg width="12" height="12" viewBox="0 0 12 12"><path d="M1 2l10 9M11 2L1 11" stroke="currentColor" strokeWidth="2.500" /></svg>
          </button>
        </WindowButtons>
      </MenuBar>
      <Options />
      <Workspace>
        <Toolbar />
        <DocumentArea>
          <DocTabs>
            <DocTab>
              제목 없음-1 @ 68.3% (RGB/8#)
              <button type="button" aria-label="문서 닫기"><Icon name="close" /></button>
            </DocTab>
          </DocTabs>
          <CanvasRow>
            <Canvas />
            <ScrollBar $vertical>
              <Icon name="chevronUp" />
              <ScrollTrack $vertical $start={230} $size={190} $rest={580} />
              <Icon name="chevronDown" />
            </ScrollBar>
          </CanvasRow>
          <StatusBar>
            <ZoomField aria-label="문서 배율" defaultValue="68.3%" />
            <DocInfo type="button">
              3000 픽셀 x 5000 픽셀 (300 ppi)
              <Icon name="chevronRight" size={16} />
            </DocInfo>
            <ScrollBar>
              <Icon name="chevronLeft" size={20} />
              <ScrollTrack $start={316} $size={334} $rest={350} />
              <Icon name="chevronRight" size={20} />
            </ScrollBar>
            <ScrollCorner />
          </StatusBar>
        </DocumentArea>
        <BrushSettings />
        <RightDock />
      </Workspace>
      <Taskbar />
    </Screen>
  );
}

export default App;
